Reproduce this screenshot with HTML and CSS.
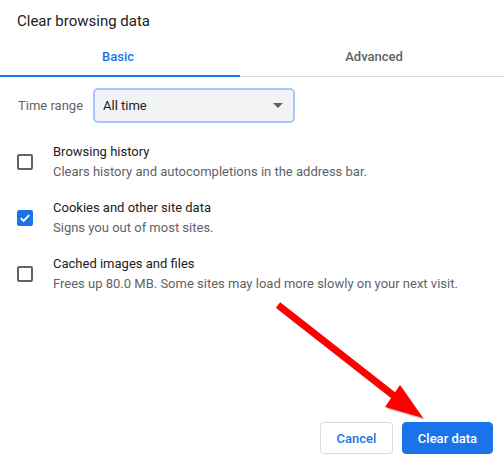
FILE: index.html
```html
<!DOCTYPE html>
<html>
<head>
<meta charset="utf-8">
<link rel="stylesheet" href="styles.css">
</head>
<body>
<div class="dialog">
  <div class="title">Clear browsing data</div>
  <div class="tabs">
    <div class="tab tab-basic active">Basic</div>
    <div class="tab tab-adv">Advanced</div>
  </div>
  <div class="range-row">
    <span class="range-label">Time range</span>
    <div class="select">
      <span>All time</span>
      <span class="caret"></span>
    </div>
  </div>
  <div class="items">
    <div class="item">
      <div class="cb"></div>
      <div class="texts">
        <div class="label">Browsing history</div>
        <div class="sub">Clears history and autocompletions in the address bar.</div>
      </div>
    </div>
    <div class="item">
      <div class="cb checked">
        <svg width="12" height="12" viewBox="0 0 12 12"><path d="M1.8 6.2 L4.6 9 L10.2 3.2" fill="none" stroke="#fff" stroke-width="1.9"/></svg>
      </div>
      <div class="texts">
        <div class="label">Cookies and other site data</div>
        <div class="sub">Signs you out of most sites.</div>
      </div>
    </div>
    <div class="item">
      <div class="cb"></div>
      <div class="texts">
        <div class="label">Cached images and files</div>
        <div class="sub">Frees up 80.0 MB. Some sites may load more slowly on your next visit.</div>
      </div>
    </div>
  </div>
  <div class="footer">
    <button class="btn btn-cancel">Cancel</button>
    <button class="btn btn-primary">Clear data</button>
  </div>
  <svg class="arrow" width="504" height="465" viewBox="0 0 504 465">
    <g opacity="0.35" transform="translate(2,2)">
      <line x1="278" y1="305" x2="398" y2="399" stroke="#777" stroke-width="7"/>
      <polygon points="423,418 400,385 385,407" fill="#777"/>
    </g>
    <line x1="278" y1="305" x2="398" y2="399" stroke="#ff0000" stroke-width="7"/>
    <polygon points="423,418 400,385 385,407" fill="#ff0000"/>
  </svg>
</div>
</body>
</html>
```
FILE: styles.css
```css
html, body {
  margin: 0;
  padding: 0;
  background: #fff;
}
body {
  font-family: Roboto, "Liberation Sans", Arial, sans-serif;
  color: #202124;
}
.dialog {
  position: relative;
  width: 504px;
  height: 465px;
  display: flex;
  flex-direction: column;
  overflow: hidden;
}
.title {
  font-size: 15px;
  line-height: 20px;
  padding: 11px 17px 0;
  color: #202124;
}
.tabs {
  display: flex;
  margin-top: 6px;
  border-bottom: 1px solid #dadce0;
}
.tab {
  height: 39px;
  line-height: 40px;
  text-align: center;
  font-size: 13px;
  font-weight: 500;
  color: #5f6368;
  box-sizing: border-box;
}
.tab-basic {
  width: 240px;
  padding-right: 4px;
}
.tab-adv {
  flex: 1;
  padding-left: 4px;
}
.tab.active {
  color: #1a73e8;
  border-bottom: 2px solid #1a73e8;
  margin-bottom: -1px;
  height: 40px;
}
.range-row {
  display: flex;
  align-items: center;
  margin-top: 11px;
  padding-left: 18px;
}
.range-label {
  font-size: 13px;
  color: #5f6368;
  width: 75px;
}
.select {
  box-sizing: border-box;
  width: 202px;
  height: 35px;
  border: 2px solid #a8c7fa;
  border-radius: 5px;
  background: #f1f3f4;
  display: flex;
  align-items: center;
  justify-content: space-between;
  padding: 0 10px 0 8px;
  font-size: 13px;
  color: #202124;
}
.caret {
  width: 0;
  height: 0;
  border-left: 5px solid transparent;
  border-right: 5px solid transparent;
  border-top: 5px solid #5f6368;
}
.items {
  display: flex;
  flex-direction: column;
  gap: 16px;
  margin-top: 19px;
}
.item {
  display: flex;
  align-items: center;
  padding-left: 17px;
}
.cb {
  box-sizing: border-box;
  width: 16px;
  height: 16px;
  border: 2px solid #5f6368;
  border-radius: 2px;
  margin-right: 20px;
  flex: none;
  display: flex;
  align-items: center;
  justify-content: center;
}
.cb.checked {
  background: #1a73e8;
  border-color: #1a73e8;
}
.texts {
  font-size: 13px;
  line-height: 20px;
}
.label {
  color: #202124;
}
.sub {
  color: #5f6368;
}
.footer {
  margin-top: auto;
  display: flex;
  justify-content: flex-end;
  gap: 9px;
  padding: 0 11px 11px 0;
}
.btn {
  height: 32px;
  border-radius: 4px;
  font-family: Roboto, "Liberation Sans", Arial, sans-serif;
  font-size: 13px;
  font-weight: 500;
  padding: 0;
  cursor: pointer;
}
.btn-cancel {
  width: 73px;
  background: #fff;
  border: 1px solid #dadce0;
  color: #1a73e8;
}
.btn-primary {
  width: 91px;
  background: #1a73e8;
  border: 1px solid #1a73e8;
  color: #fff;
}
.arrow {
  position: absolute;
  left: 0;
  top: 0;
  pointer-events: none;
}
```
